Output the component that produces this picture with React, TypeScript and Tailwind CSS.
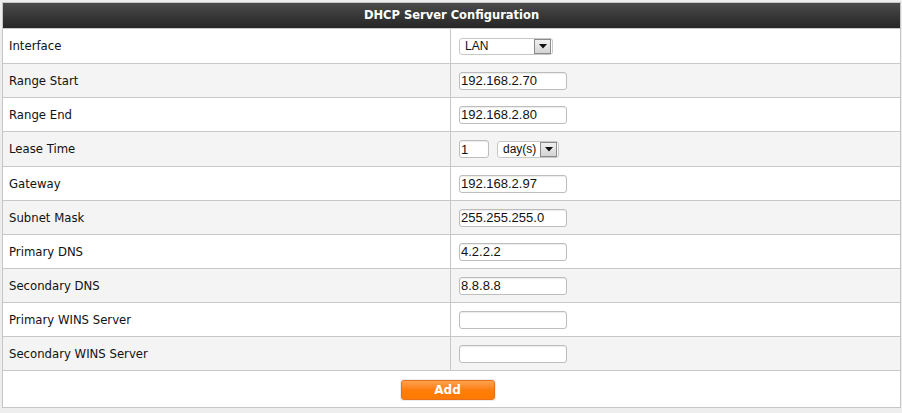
import React from "react";

const rows: { label: string; kind: "select" | "text" | "lease"; value?: string; h: string }[] = [
  { label: "Interface", kind: "select", value: "LAN", h: "h-[35px]" },
  { label: "Range Start", kind: "text", value: "192.168.2.70", h: "h-[34px]" },
  { label: "Range End", kind: "text", value: "192.168.2.80", h: "h-[34px]" },
  { label: "Lease Time", kind: "lease", h: "h-[35px]" },
  { label: "Gateway", kind: "text", value: "192.168.2.97", h: "h-[34px]" },
  { label: "Subnet Mask", kind: "text", value: "255.255.255.0", h: "h-[34px]" },
  { label: "Primary DNS", kind: "text", value: "4.2.2.2", h: "h-[34px]" },
  { label: "Secondary DNS", kind: "text", value: "8.8.8.8", h: "h-[34px]" },
  { label: "Primary WINS Server", kind: "text", value: "", h: "h-[34px]" },
  { label: "Secondary WINS Server", kind: "text", value: "", h: "h-[34px]" },
];

function Arrow() {
  return (
    <div className="flex h-full w-[17px] shrink-0 items-center justify-center border border-[#8a8a8a] bg-gradient-to-b from-[#f0f0f0] to-[#d4d4d4]">
      <svg width="8" height="5" viewBox="0 0 8 5">
        <path d="M0 0 L8 0 L4 4.5 Z" fill="#111" />
      </svg>
    </div>
  );
}

function TextBox({ value, w = "w-[108px]" }: { value: string; w?: string }) {
  return (
    <div
      className={`flex h-[18px] ${w} items-center rounded-[3px] border border-[#bdbdbd] bg-white pl-[1px] text-[13px] leading-none text-[#111] shadow-[inset_0_1px_1px_rgba(0,0,0,0.08)]`}
      style={{ fontFamily: '"Liberation Sans", Arial, sans-serif' }}
    >
      {value}
    </div>
  );
}

function SelectBox({ value, w, size }: { value: string; w: string; size: string }) {
  return (
    <div
      className={`flex h-[17px] ${w} shrink-0 items-center justify-between rounded-[3px] border border-[#c8c8c8] bg-white pl-[5px] pr-[1px] ${size} leading-none text-[#111]`}
      style={{ fontFamily: '"Liberation Sans", Arial, sans-serif' }}
    >
      <span>{value}</span>
      <div className="h-[15px]">
        <Arrow />
      </div>
    </div>
  );
}

export default function App() {
  return (
    <div
      className="min-h-[413px] w-[902px] bg-[#eeeeee] pt-[2px] pl-[2px]"
      style={{ fontFamily: '"DejaVu Sans", Verdana, sans-serif' }}
    >
      <div className="w-[899px] border border-[#c6c6c6] bg-white">
        <div className="flex h-[26px] items-center justify-center border-b border-[#c6c6c6] bg-gradient-to-b from-[#4b4b4b] to-[#262626] text-[11.5px] font-bold text-white">
          DHCP Server Configuration
        </div>
        {rows.map((r, i) => (
          <div
            key={r.label}
            className={`flex ${r.h} border-b border-[#c8c8c8] ${i % 2 === 0 ? "bg-white" : "bg-[#f4f4f4]"}`}
          >
            <div className="flex w-[448px] items-center border-r border-[#c8c8c8] pl-[6px] pt-[2px] text-[11.7px] text-[#111]">
              {r.label}
            </div>
            <div className="flex flex-1 items-center pl-[8px]">
              {r.kind === "select" && <SelectBox value={r.value!} w="w-[94px]" size="text-[12px]" />}
              {r.kind === "text" && <TextBox value={r.value!} />}
              {r.kind === "lease" && (
                <div className="flex items-center gap-[8px]">
                  <TextBox value="1" w="w-[30px]" />
                  <SelectBox value="day(s)" w="w-[62px]" size="text-[12px]" />
                </div>
              )}
            </div>
          </div>
        ))}
        <div className="flex h-[36px] items-center justify-center">
          <div className="mr-[8px] mt-[1px] rounded-[3px] bg-[#ececec] p-[1px]">
            <div
              className="flex h-[20px] w-[94px] items-center justify-center rounded-[3px] border border-[#e8701a] bg-gradient-to-b from-[#ffa24a] via-[#ff7d0a] to-[#ff7a00] text-[12px] font-bold text-white"
              style={{ fontFamily: '"DejaVu Sans", Verdana, sans-serif' }}
            >
              Add
            </div>
          </div>
        </div>
      </div>
    </div>
  );
}
